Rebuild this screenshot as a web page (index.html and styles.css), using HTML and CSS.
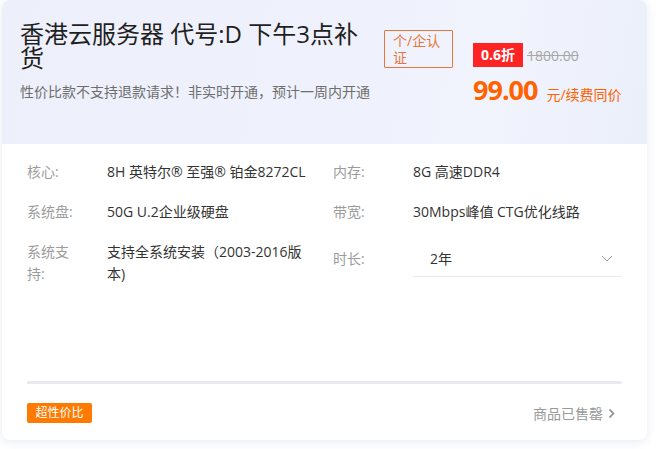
FILE: index.html
```html
<!DOCTYPE html>
<html lang="zh-CN">
<head>
<meta charset="utf-8">
<title>香港云服务器</title>
<link rel="stylesheet" href="styles.css">
</head>
<body>
<div class="page">
  <div class="card">
    <div class="head">
      <div class="head-main">
        <h1 class="title">香港云服务器 代号:D 下午3点补货</h1>
        <p class="sub">性价比款不支持退款请求！非实时开通，预计一周内开通</p>
      </div>
      <div class="tag">个/企认证</div>
      <div class="price">
        <div class="price-top">
          <span class="off">0.6折</span>
          <span class="orig">1800.00</span>
        </div>
        <div class="price-now">
          <span class="num">99.00</span>
          <span class="unit">元/续费同价</span>
        </div>
      </div>
    </div>
    <div class="body">
      <div class="specs">
        <div class="label">核心:</div>
        <div class="value">8H 英特尔® 至强® 铂金8272CL</div>
        <div class="label">内存:</div>
        <div class="value">8G 高速DDR4</div>

        <div class="label">系统盘:</div>
        <div class="value">50G U.2企业级硬盘</div>
        <div class="label">带宽:</div>
        <div class="value">30Mbps峰值 CTG优化线路</div>

        <div class="label">系统支持:</div>
        <div class="value">支持全系统安装（2003-2016版本)</div>
        <div class="label label-mid">时长:</div>
        <div class="select">
          <span>2年</span>
          <svg class="chev" width="12" height="7" viewBox="0 0 12 7"><path d="M1 1 L6 6 L11 1" fill="none" stroke="#9a9a9a" stroke-width="1"/></svg>
        </div>
      </div>
      <div class="sep"></div>
      <div class="foot">
        <span class="badge">超性价比</span>
        <span class="sold">商品已售罄<svg class="arrow" width="7" height="11" viewBox="0 0 7 11"><path d="M1.5 1.5 L5.5 5.5 L1.5 9.5" fill="none" stroke="#9a9a9a" stroke-width="1.8"/></svg></span>
      </div>
    </div>
  </div>
</div>
</body>
</html>
```
FILE: styles.css
```css
* { box-sizing: border-box; }
html, body { margin: 0; background: #ffffff; }
body {
  font-family: "Open Sans", "Noto Sans CJK SC", sans-serif;
  color: #333;
}
.page { padding: 0 9px 9px 2px; }
.card {
  width: 645px;
  height: 440px;
  border-radius: 8px;
  background: #fff;
  box-shadow: 0 2px 10px rgba(40, 60, 120, 0.10);
  overflow: hidden;
  display: flex;
  flex-direction: column;
}
.head {
  height: 144px;
  display: flex;
  align-items: flex-start;
  padding: 22px 0 0 18px;
  background: linear-gradient(100deg, #edf0fb 0%, #eff2fc 55%, #f1f4fd 75%, #ebeffa 100%);
}
.head-main { width: 352px; flex: none; }
.title {
  margin: 0;
  font-size: 24px;
  line-height: 24px;
  font-weight: 400;
  color: #1f1f1f;
}
.sub {
  margin: 12px 0 0;
  font-size: 14px;
  line-height: 20px;
  color: #6e6e6e;
  white-space: nowrap;
}
.tag {
  flex: none;
  width: 69px;
  margin: 8px 0 0 12px;
  padding: 1px 8px 1px 8px;
  border: 1px solid #e6773a;
  border-radius: 1px;
  font-size: 14px;
  line-height: 17px;
  color: #e6773a;
}
.price { margin: 21px 0 0 20px; }
.price-top { display: flex; align-items: center; }
.off {
  width: 50px;
  height: 24px;
  line-height: 24px;
  text-align: center;
  background: #ff2424;
  color: #fff;
  font-size: 14px;
  font-weight: 700;
}
.orig {
  margin-left: 4px;
  font-size: 14px;
  color: #a8a8a8;
  text-decoration: line-through;
}
.price-now {
  display: flex;
  align-items: baseline;
  margin-top: 6px;
  color: #ff6200;
}
.num { font-size: 27px; line-height: 34px; font-weight: 700; letter-spacing: -1px; }
.unit { margin-left: 9px; font-size: 14px; }
.body {
  flex: 1;
  display: flex;
  flex-direction: column;
  padding: 17px 25px 17px 25px;
}
.specs {
  display: grid;
  grid-template-columns: 80px 226px 80px 209px;
  row-gap: 18px;
  font-size: 14px;
  line-height: 22px;
}
.label { color: #9c9c9c; width: 52px; }
.label-mid { margin-top: 7px; }
.value { color: #333; padding-right: 26px; }
.select {
  height: 36px;
  display: flex;
  align-items: center;
  justify-content: space-between;
  padding: 0 9px 0 17px;
  border-bottom: 1px solid #e7e9f2;
  color: #333;
}
.sep {
  margin-top: auto;
  height: 3px;
  background: #e8eaef;
}
.foot {
  margin-top: 19px;
  display: flex;
  justify-content: space-between;
  align-items: center;
}
.badge {
  height: 20px;
  line-height: 20px;
  padding: 0 8.5px;
  background: #ff7a00;
  color: #fff;
  font-size: 12px;
  border-radius: 2px;
}
.sold {
  display: flex;
  align-items: center;
  margin-right: 7px;
  font-size: 14px;
  color: #999;
}
.arrow { margin-left: 5px; }
```
